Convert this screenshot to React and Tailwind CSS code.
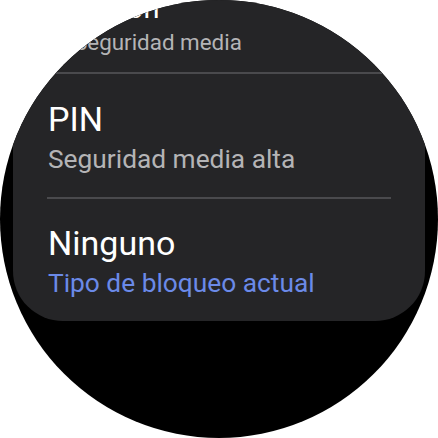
export default function App() {
  return (
    <div className="w-[438px] h-[438px] bg-white" style={{ fontFamily: "Roboto, 'Noto Sans', sans-serif" }}>
      <div className="w-[438px] h-[438px] rounded-full overflow-hidden bg-black">
        <div className="mx-[13px] mt-[-29px] bg-[#252527] rounded-b-[50px] flex flex-col">
          <div className="pl-[61px] pt-[20px] pb-[16px]">
            <div className="text-[29px] leading-[34px] text-white">Patrón</div>
            <div className="mt-[4px] text-[22.4px] leading-[27px] text-[#b4b4b6]">Seguridad media</div>
          </div>
          <div className="mx-[34px] h-[2px] bg-[#4a4a4d]" />
          <div className="pl-[35px] pt-[25px] pb-[22px]">
            <div className="text-[34px] leading-[40px] text-white">PIN</div>
            <div className="mt-[4px] text-[26.3px] leading-[32px] text-[#b4b4b6]">Seguridad media alta</div>
          </div>
          <div className="mx-[34px] h-[2px] bg-[#4a4a4d]" />
          <div className="pl-[35px] pt-[24px] pb-[22px]">
            <div className="text-[34px] leading-[40px] text-white">Ninguno</div>
            <div className="mt-[4px] text-[26.3px] leading-[32px] text-[#6b8ae8]">Tipo de bloqueo actual</div>
          </div>
        </div>
      </div>
    </div>
  );
}
